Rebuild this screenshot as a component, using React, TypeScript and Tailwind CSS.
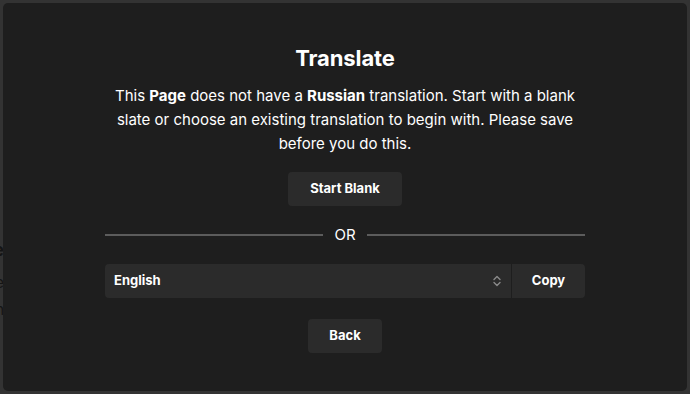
import React from "react";

export default function App() {
  return (
    <div
      className="relative w-[690px] h-[394px] overflow-hidden bg-[#333333]"
      style={{ fontFamily: "Inter, 'Noto Sans', sans-serif" }}
    >
      {/* background page peeking at left edge */}
      <div className="absolute left-[-200px] top-[239px] w-[204px] text-right text-[#151515]">
        <div className="text-[17px] font-bold leading-[22px]">Some title here</div>
        <div className="mt-[11px] text-[15px] leading-[22px]">some more</div>
        <div className="mt-[5px] text-[15px] leading-[22px]">and with</div>
      </div>

      {/* modal */}
      <div className="absolute left-[3px] top-[3px] right-[3px] bottom-[3px] rounded-[5px] bg-[#1e1e1e] flex flex-col items-center pt-[41px] text-white">
        <h1 className="text-[22px] font-bold leading-[28px] tracking-[-0.1px]">Translate</h1>
        <p className="mt-[12px] w-[480px] text-center text-[15px] leading-[24px] text-white">
          This <span className="font-bold">Page</span> does not have a{" "}
          <span className="font-bold">Russian</span> translation. Start with a blank slate or
          choose an existing translation to begin with. Please save before you do this.
        </p>
        <button className="mt-[16px] h-[34px] w-[114px] rounded-[4px] bg-[#2b2b2b] text-[13px] font-bold text-white">
          Start Blank
        </button>
        <div className="mt-[19px] flex w-[480px] items-center">
          <div className="h-[2px] flex-1 bg-[#5c5c5c]" />
          <span className="w-[44px] text-center text-[15px] leading-[20px] text-white">OR</span>
          <div className="h-[2px] flex-1 bg-[#5c5c5c]" />
        </div>
        <div className="mt-[19px] flex w-[480px] h-[34px] gap-[1px]">
          <div className="flex flex-1 items-center justify-between rounded-l-[4px] bg-[#2b2b2b] pl-[9px] pr-[9px]">
            <span className="text-[13px] font-bold text-white">English</span>
            <svg width="10" height="14" viewBox="0 0 10 14" fill="none" stroke="#8a8a8a" strokeWidth="1.4" strokeLinecap="round" strokeLinejoin="round">
              <path d="M2 5.5 L5 2.5 L8 5.5" />
              <path d="M2 8.5 L5 11.5 L8 8.5" />
            </svg>
          </div>
          <button className="w-[73px] rounded-r-[4px] bg-[#2b2b2b] text-[13px] font-bold text-white">
            Copy
          </button>
        </div>
        <button className="mt-[21px] h-[34px] w-[74px] rounded-[4px] bg-[#2b2b2b] text-[13px] font-bold text-white">
          Back
        </button>
      </div>
    </div>
  );
}
